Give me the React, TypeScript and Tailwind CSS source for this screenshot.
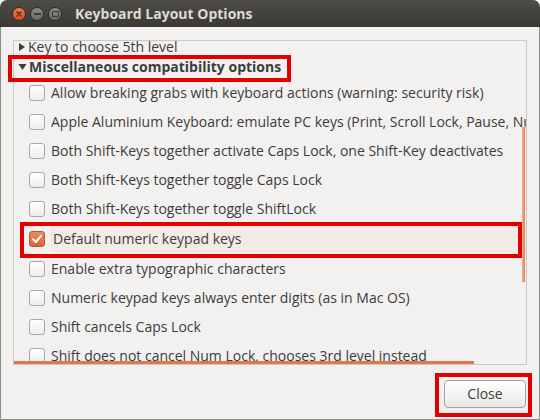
import React from "react";

const rows: { label: string; checked?: boolean }[] = [
  { label: "Allow breaking grabs with keyboard actions (warning: security risk)" },
  { label: "Apple Aluminium Keyboard: emulate PC keys (Print, Scroll Lock, Pause, Num Lock)" },
  { label: "Both Shift-Keys together activate Caps Lock, one Shift-Key deactivates" },
  { label: "Both Shift-Keys together toggle Caps Lock" },
  { label: "Both Shift-Keys together toggle ShiftLock" },
  { label: "Default numeric keypad keys", checked: true },
  { label: "Enable extra typographic characters" },
  { label: "Numeric keypad keys always enter digits (as in Mac OS)" },
  { label: "Shift cancels Caps Lock" },
  { label: "Shift does not cancel Num Lock, chooses 3rd level instead" },
];

function Checkbox({ checked }: { checked?: boolean }) {
  if (checked) {
    return (
      <div className="w-[16px] h-[16px] rounded-[3px] border border-[#b35a36] bg-gradient-to-b from-[#f08a5f] to-[#d9643a] flex items-center justify-center shrink-0">
        <svg width="12" height="12" viewBox="0 0 12 12">
          <path d="M2 6.2 L4.8 9 L10 2.8" fill="none" stroke="#ffffff" strokeWidth="2" strokeLinecap="round" strokeLinejoin="round" />
        </svg>
      </div>
    );
  }
  return (
    <div className="w-[16px] h-[16px] rounded-[3px] border border-[#a9a8a5] bg-gradient-to-b from-[#ffffff] to-[#eeedeb] shrink-0" />
  );
}

export default function App() {
  return (
    <div
      className="relative w-[540px] h-[420px] bg-white overflow-hidden"
      style={{ fontFamily: '"Open Sans", "Noto Sans", sans-serif' }}
    >
      <div className="flex flex-col w-full h-full">
        {/* Title bar */}
        <div className="h-[27px] shrink-0 rounded-t-[7px] bg-gradient-to-b from-[#4d4c47] to-[#3a3935] flex items-center pl-[12px] gap-[4px]">
          <div className="w-[14px] h-[14px] rounded-full bg-gradient-to-b from-[#f07a4c] to-[#d94f1e] border border-[#2c2b28] flex items-center justify-center">
            <svg width="8" height="8" viewBox="0 0 8 8">
              <path d="M2 2 L6 6 M6 2 L2 6" stroke="#4a2010" strokeWidth="1.4" strokeLinecap="round" />
            </svg>
          </div>
          <div className="w-[14px] h-[14px] rounded-full bg-gradient-to-b from-[#8a8984] to-[#6b6a66] border border-[#2c2b28] flex items-center justify-center">
            <div className="w-[7px] h-[2px] bg-[#3c3b37]" />
          </div>
          <div className="w-[14px] h-[14px] rounded-full bg-gradient-to-b from-[#8a8984] to-[#6b6a66] border border-[#2c2b28] flex items-center justify-center">
            <div className="w-[7px] h-[6px] border border-[#3c3b37]" />
          </div>
          <div className="ml-[9px] text-[14px] font-bold text-[#dfdbd2] leading-none">Keyboard Layout Options</div>
        </div>

        {/* Body */}
        <div className="flex-1 bg-[#f2f1f0] border-l border-r border-b border-[#8e8d89] flex flex-col pl-[12px] pr-[12px]">
          <div className="mt-[13px] h-[325px] border border-[#c9c8c5] bg-[#f2f1f0] overflow-hidden relative">
            <div className="flex flex-col text-[14px] text-[#3c3c3c] -mt-[4px]">
              <div className="h-[20px] flex items-center pl-[4px] gap-[2px]">
                <svg width="8" height="10" viewBox="0 0 8 10">
                  <path d="M1 1 L7 5 L1 9 Z" fill="#3c3c3c" />
                </svg>
                <span className="leading-none">Key to choose 5th level</span>
              </div>
              <div className="h-[20px] flex items-center pl-[4px] gap-[2px]">
                <svg width="9" height="8" viewBox="0 0 9 8">
                  <path d="M0.5 1 L8.5 1 L4.5 7 Z" fill="#3c3c3c" />
                </svg>
                <span className="leading-none font-bold">Miscellaneous compatibility options</span>
              </div>
              <div className="h-[1px]" />
              {rows.map((r) => (
                <div
                  key={r.label}
                  className={
                    r.checked
                      ? "h-[31px] flex items-center pl-[15px] gap-[6px] whitespace-nowrap"
                      : "h-[29px] flex items-center pl-[15px] gap-[6px] whitespace-nowrap"
                  }
                >
                  <Checkbox checked={r.checked} />
                  <span
                    className={
                      r.checked
                        ? "leading-none py-[5px] pl-[1px] w-[469px] shrink-0 rounded-[3px] bg-[#f4ebe6] border border-[#ece2dc]"
                        : "leading-none"
                    }
                  >
                    {r.label}
                  </span>
                </div>
              ))}
            </div>
            {/* overshoot indicators */}
            <div className="absolute right-[1px] top-[86px] w-[3px] h-[155px] bg-gradient-to-r from-[#f3b596] to-[#e07a4e]" />
            <div className="absolute left-0 bottom-0 w-[460px] h-[3px] bg-[#e0784c]" />
          </div>
          <div className="flex justify-end mt-[15px]">
            <button className="w-[82px] h-[28px] rounded-[4px] border border-[#a4a3a0] bg-gradient-to-b from-[#ffffff] to-[#e9e8e6] text-[14px] text-[#3c3c3c] leading-none mr-[1px]">
              Close
            </button>
          </div>
        </div>
      </div>

      {/* Red annotation boxes */}
      <div className="absolute left-[8px] top-[55px] w-[283px] h-[27px] border-[4px] border-[#e30000]" />
      <div className="absolute left-[20px] top-[222px] w-[502px] h-[36px] border-[4px] border-[#e30000]" />
      <div className="absolute left-[435px] top-[373px] w-[97px] h-[44px] border-[4px] border-[#e30000]" />
    </div>
  );
}
